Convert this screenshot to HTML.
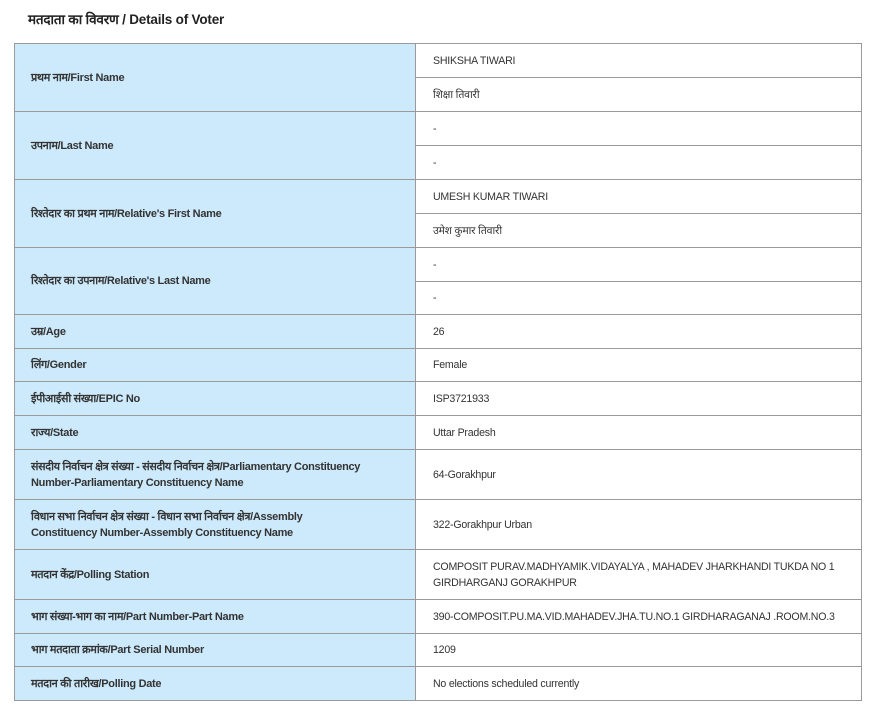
<!DOCTYPE html><html><head><meta charset="utf-8"><style>
body{margin:0;background:#fff;width:872px;height:705px;position:relative;font-family:"Liberation Sans","Noto Sans CJK SC",sans-serif;color:#222;font-size:11px;overflow:hidden}
.t{position:absolute;left:28px;top:10px;font-size:13.5px;font-weight:bold;color:#222;letter-spacing:-0.2px}
.c{position:absolute;box-sizing:border-box;border:1px solid #9a9a9a;display:flex;align-items:center;line-height:16px;white-space:nowrap}
.l{left:14px;width:402px;background:#cdeafc;padding-left:16px;font-weight:bold;color:#333;letter-spacing:-0.3px}
.r{left:415px;width:447px;background:#fff;padding-left:17px;color:#333;letter-spacing:-0.22px;font-size:10.6px}
</style></head><body>
<div class="t">मतदाता का विवरण / Details of Voter</div>
<div class="c l" style="top:43px;height:69px">प्रथम नाम/First Name</div>
<div class="c r" style="top:43px;height:35px">SHIKSHA TIWARI</div>
<div class="c r" style="top:77px;height:35px">शिक्षा तिवारी</div>
<div class="c l" style="top:111px;height:69px">उपनाम/Last Name</div>
<div class="c r" style="top:111px;height:35px">-</div>
<div class="c r" style="top:145px;height:35px">-</div>
<div class="c l" style="top:179px;height:69px">रिश्तेदार का प्रथम नाम/Relative's First Name</div>
<div class="c r" style="top:179px;height:35px">UMESH KUMAR TIWARI</div>
<div class="c r" style="top:213px;height:35px">उमेश कुमार तिवारी</div>
<div class="c l" style="top:247px;height:68px">रिश्तेदार का उपनाम/Relative's Last Name</div>
<div class="c r" style="top:247px;height:35px">-</div>
<div class="c r" style="top:281px;height:34px">-</div>
<div class="c l" style="top:314px;height:35px">उम्र/Age</div>
<div class="c r" style="top:314px;height:35px">26</div>
<div class="c l" style="top:348px;height:34px">लिंग/Gender</div>
<div class="c r" style="top:348px;height:34px">Female</div>
<div class="c l" style="top:381px;height:35px">ईपीआईसी संख्या/EPIC No</div>
<div class="c r" style="top:381px;height:35px">ISP3721933</div>
<div class="c l" style="top:415px;height:35px">राज्य/State</div>
<div class="c r" style="top:415px;height:35px">Uttar Pradesh</div>
<div class="c l" style="top:449px;height:51px">संसदीय निर्वाचन क्षेत्र संख्या - संसदीय निर्वाचन क्षेत्र/Parliamentary Constituency<br>Number-Parliamentary Constituency Name</div>
<div class="c r" style="top:449px;height:51px">64-Gorakhpur</div>
<div class="c l" style="top:499px;height:51px">विधान सभा निर्वाचन क्षेत्र संख्या - विधान सभा निर्वाचन क्षेत्र/Assembly<br>Constituency Number-Assembly Constituency Name</div>
<div class="c r" style="top:499px;height:51px">322-Gorakhpur Urban</div>
<div class="c l" style="top:549px;height:51px">मतदान केंद्र/Polling Station</div>
<div class="c r" style="top:549px;height:51px">COMPOSIT PURAV.MADHYAMIK.VIDAYALYA , MAHADEV JHARKHANDI TUKDA NO 1<br>GIRDHARGANJ GORAKHPUR</div>
<div class="c l" style="top:599px;height:35px">भाग संख्या-भाग का नाम/Part Number-Part Name</div>
<div class="c r" style="top:599px;height:35px">390-COMPOSIT.PU.MA.VID.MAHADEV.JHA.TU.NO.1 GIRDHARAGANAJ .ROOM.NO.3</div>
<div class="c l" style="top:633px;height:34px">भाग मतदाता क्रमांक/Part Serial Number</div>
<div class="c r" style="top:633px;height:34px">1209</div>
<div class="c l" style="top:666px;height:35px">मतदान की तारीख/Polling Date</div>
<div class="c r" style="top:666px;height:35px">No elections scheduled currently</div>
</body></html>
